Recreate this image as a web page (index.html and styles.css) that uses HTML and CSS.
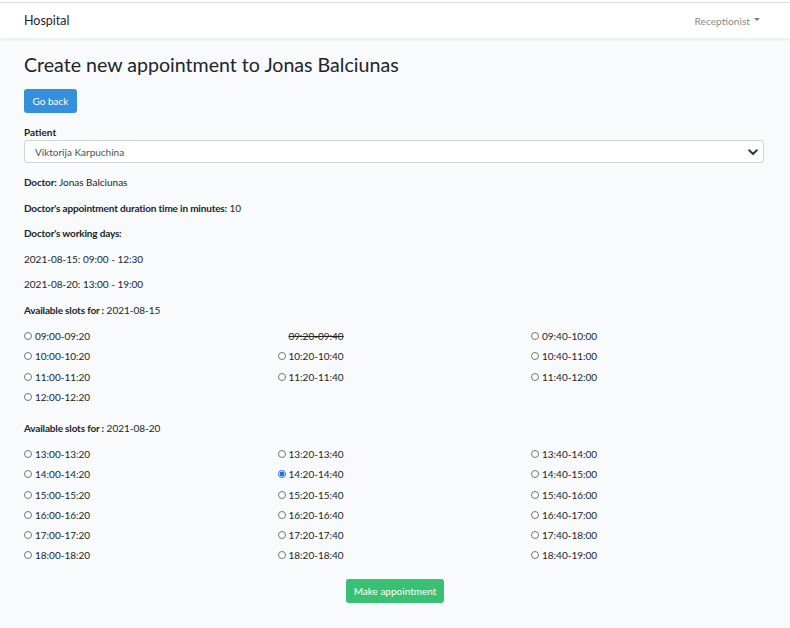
FILE: index.html
```html
<!DOCTYPE html>
<html lang="en">
<head>
<meta charset="utf-8">
<title>Hospital</title>
<link rel="stylesheet" href="styles.css">
</head>
<body>
<div class="topline"></div>
<nav class="navbar">
  <a class="brand" href="#">Hospital</a>
  <a class="user" href="#">Receptionist <span class="caret"></span></a>
</nav>
<main class="main">
  <h3 class="title">Create new appointment to Jonas Balciunas</h3>
  <a class="btn btn-blue" href="#">Go back</a>
  <form class="form">
    <label class="label" for="patient">Patient</label>
    <div class="select-wrap">
      <select id="patient" class="select">
        <option>Viktorija Karpuchina</option>
      </select>
      <svg class="chev" width="10" height="8" viewBox="0 0 10 8"><path d="M1.2 2.2 L5 6 L8.8 2.2" fill="none" stroke="#343a40" stroke-width="2" stroke-linecap="round" stroke-linejoin="round"/></svg>
    </div>
    <p class="info"><b>Doctor:</b> Jonas Balciunas</p>
    <p class="info"><b>Doctor's appointment duration time in minutes:</b> 10</p>
    <p class="info"><b>Doctor's working days:</b></p>
    <p class="info">2021-08-15: 09:00 - 12:30</p>
    <p class="info">2021-08-20: 13:00 - 19:00</p>

    <p class="info"><b>Available slots for :</b> 2021-08-15</p>
    <div class="slots">
      <label class="slot"><input type="radio" name="slot"><span>09:00-09:20</span></label>
      <label class="slot taken"><input type="radio" name="slot" disabled><span>09:20-09:40</span></label>
      <label class="slot"><input type="radio" name="slot"><span>09:40-10:00</span></label>
      <label class="slot"><input type="radio" name="slot"><span>10:00-10:20</span></label>
      <label class="slot"><input type="radio" name="slot"><span>10:20-10:40</span></label>
      <label class="slot"><input type="radio" name="slot"><span>10:40-11:00</span></label>
      <label class="slot"><input type="radio" name="slot"><span>11:00-11:20</span></label>
      <label class="slot"><input type="radio" name="slot"><span>11:20-11:40</span></label>
      <label class="slot"><input type="radio" name="slot"><span>11:40-12:00</span></label>
      <label class="slot"><input type="radio" name="slot"><span>12:00-12:20</span></label>
    </div>

    <p class="info second"><b>Available slots for :</b> 2021-08-20</p>
    <div class="slots">
      <label class="slot"><input type="radio" name="slot"><span>13:00-13:20</span></label>
      <label class="slot"><input type="radio" name="slot"><span>13:20-13:40</span></label>
      <label class="slot"><input type="radio" name="slot"><span>13:40-14:00</span></label>
      <label class="slot"><input type="radio" name="slot"><span>14:00-14:20</span></label>
      <label class="slot"><input type="radio" name="slot" checked><span>14:20-14:40</span></label>
      <label class="slot"><input type="radio" name="slot"><span>14:40-15:00</span></label>
      <label class="slot"><input type="radio" name="slot"><span>15:00-15:20</span></label>
      <label class="slot"><input type="radio" name="slot"><span>15:20-15:40</span></label>
      <label class="slot"><input type="radio" name="slot"><span>15:40-16:00</span></label>
      <label class="slot"><input type="radio" name="slot"><span>16:00-16:20</span></label>
      <label class="slot"><input type="radio" name="slot"><span>16:20-16:40</span></label>
      <label class="slot"><input type="radio" name="slot"><span>16:40-17:00</span></label>
      <label class="slot"><input type="radio" name="slot"><span>17:00-17:20</span></label>
      <label class="slot"><input type="radio" name="slot"><span>17:20-17:40</span></label>
      <label class="slot"><input type="radio" name="slot"><span>17:40-18:00</span></label>
      <label class="slot"><input type="radio" name="slot"><span>18:00-18:20</span></label>
      <label class="slot"><input type="radio" name="slot"><span>18:20-18:40</span></label>
      <label class="slot"><input type="radio" name="slot"><span>18:40-19:00</span></label>
    </div>
    <div class="actions">
      <button type="button" class="btn btn-green">Make appointment</button>
    </div>
  </form>
</main>
</body>
</html>
```

FILE: styles.css
```css
* { box-sizing: border-box; }
html, body { margin: 0; padding: 0; }
body {
  background: #f8fafc;
  color: #212529;
  font-family: "Lato", "Open Sans", sans-serif;
  font-size: 11.5px;
  height: 628px;
  overflow: hidden;
}
.topline {
  height: 3px;
  background: #fff;
  border-bottom: 1px solid #dedede;
}
.navbar {
  height: 35px;
  background: #fff;
  box-shadow: 0 2px 3px rgba(0,0,0,0.06);
  display: flex;
  align-items: center;
  justify-content: space-between;
  padding: 0 30px 0 24px;
}
.brand {
  color: #212529;
  text-decoration: none;
  font-size: 12.5px;
}
.user {
  color: rgba(0,0,0,0.5);
  text-decoration: none;
  font-size: 10.2px;
  display: flex;
  align-items: center;
  gap: 4px;
}
.caret {
  width: 0; height: 0;
  border-left: 3.5px solid transparent;
  border-right: 3.5px solid transparent;
  border-top: 3.5px solid rgba(0,0,0,0.5);
  margin-top: -2px;
}
.main {
  padding: 14px 26px 0 24px;
}
.title {
  margin: 0 0 10px;
  font-size: 19.6px;
  font-weight: 400;
  line-height: 26px;
}
.btn {
  display: inline-flex;
  align-items: center;
  justify-content: center;
  height: 24px;
  border: none;
  border-radius: 3px;
  color: #fff;
  text-decoration: none;
  font-family: inherit;
  font-size: 10px;
  cursor: pointer;
}
.btn-blue { background: #3490dc; width: 53px; margin-top: 1px; }
.btn-green { background: #38c172; width: 98px; }
.form { margin-top: 12px; }
.label {
  display: block;
  font-weight: 700;
  font-size: 10px;
  line-height: 14px;
  margin-bottom: 1px;
}
.select-wrap { position: relative; }
.select {
  display: block;
  width: 100%;
  height: 23px;
  appearance: none;
  -webkit-appearance: none;
  background: #fff;
  border: 1px solid #ced4da;
  border-radius: 3px;
  padding: 0 10px;
  font-family: inherit;
  font-size: 10px;
  color: #495057;
}
.chev { position: absolute; right: 6px; top: 8px; }
.info {
  margin: 12px 0 10.5px;
  font-size: 10px;
  line-height: 15px;
}
.info b { letter-spacing: -0.17px; }
.info + .info { margin-top: 0; }
.info.second { margin-top: 13.5px; }
.slots {
  display: grid;
  grid-template-columns: repeat(3, 253.5px);
  grid-auto-rows: 20.25px;
  margin-top: -2px;
}
.slot {
  display: flex;
  align-items: center;
  gap: 3px;
  font-size: 10px;
}
.slot input {
  appearance: none;
  -webkit-appearance: none;
  margin: 0;
  width: 8px;
  height: 8px;
  border: 1px solid #767676;
  border-radius: 50%;
  background: #fff;
}
.slot input:checked {
  border-color: #1a73e8;
  background: radial-gradient(circle, #1a73e8 0 2.2px, #fff 2.6px);
}
.slot.taken input { visibility: hidden; }
.slot.taken span { text-decoration: line-through; }
.actions {
  display: flex;
  justify-content: center;
  margin-top: 13px;
  padding-left: 2px;
}
```
